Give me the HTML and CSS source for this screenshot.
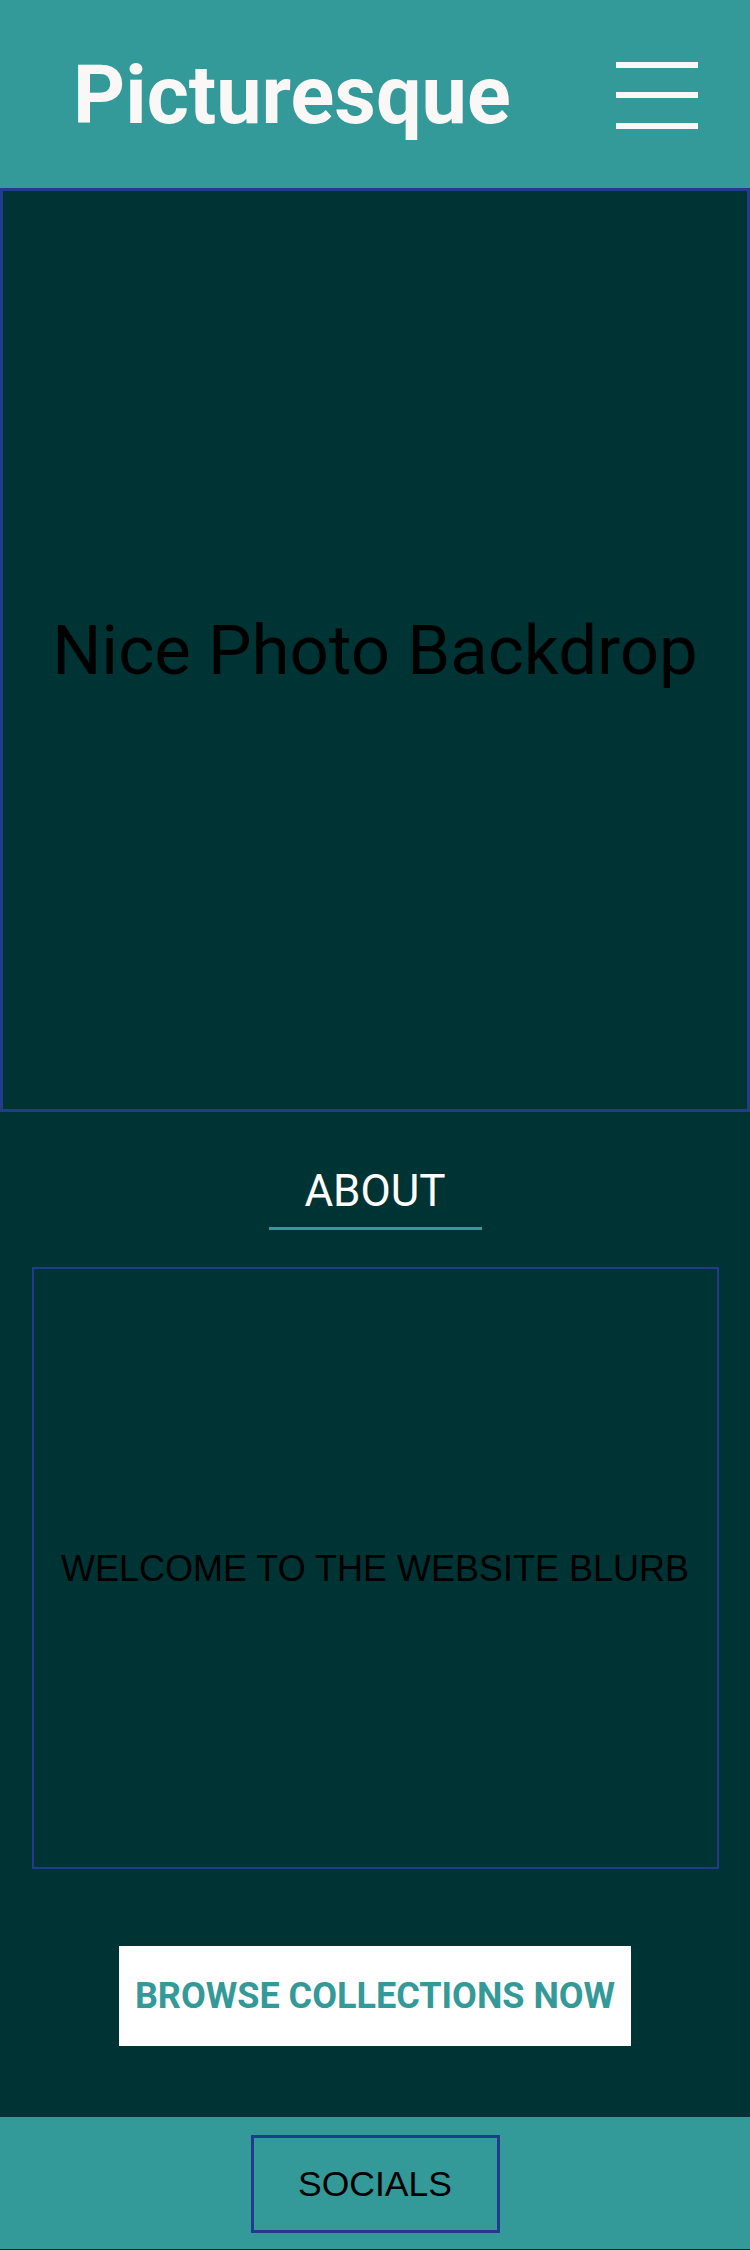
FILE: index.html
```html
<!DOCTYPE html>
<html lang="en">
<head>
<meta charset="utf-8">
<title>Picturesque</title>
<link rel="stylesheet" href="styles.css">
</head>
<body>
<header class="topbar">
  <h1 class="brand">Picturesque</h1>
  <button class="menu" aria-label="Menu">
    <span class="bar"></span>
    <span class="bar"></span>
    <span class="bar"></span>
  </button>
</header>
<main class="main">
  <section class="hero">
    <p class="hero-text">Nice Photo Backdrop</p>
  </section>
  <section class="about">
    <h2 class="about-title">ABOUT</h2>
    <div class="about-rule"></div>
    <div class="blurb">
      <p class="blurb-text">WELCOME TO THE WEBSITE BLURB</p>
    </div>
    <a class="cta" href="#">BROWSE COLLECTIONS NOW</a>
  </section>
</main>
<footer class="footer">
  <div class="socials">SOCIALS</div>
</footer>
</body>
</html>
```

FILE: styles.css
```css
* { box-sizing: border-box; }
html, body { margin: 0; padding: 0; }
body {
  background: #003333;
  font-family: Roboto, "Liberation Sans", sans-serif;
  width: 750px;
}
.topbar {
  background: #339999;
  height: 188px;
  display: flex;
  align-items: center;
  justify-content: space-between;
  padding: 0 52px 0 73px;
}
.brand {
  margin: 0;
  color: #faf8f6;
  font-family: Roboto, sans-serif;
  font-weight: 700;
  font-size: 81px;
  line-height: 1;
  padding-top: 3px;
}
.menu {
  background: none;
  border: 0;
  padding: 0;
  width: 82px;
  height: 67px;
  display: flex;
  flex-direction: column;
  justify-content: space-between;
  margin-top: 2px;
}
.bar {
  display: block;
  height: 6px;
  width: 82px;
  background: #faf8f6;
}
.hero {
  height: 924px;
  border: 3px solid #233b8c;
  display: flex;
  align-items: center;
  justify-content: center;
}
.hero-text {
  margin: 0;
  color: #000;
  font-family: Roboto, sans-serif;
  font-size: 69px;
  line-height: 1;
}
.about {
  display: flex;
  flex-direction: column;
  align-items: center;
  padding: 57px 0 71px;
}
.about-title {
  margin: 0;
  color: #fff;
  font-family: Roboto, sans-serif;
  font-weight: 400;
  font-size: 44px;
  line-height: 45px;
}
.about-rule {
  width: 213px;
  height: 3px;
  background: #339999;
  margin-top: 13px;
}
.blurb {
  margin-top: 37px;
  width: 687px;
  height: 602px;
  border: 2px solid #233b8c;
  display: flex;
  align-items: center;
  justify-content: center;
}
.blurb-text {
  margin: 0;
  color: #000;
  font-family: "Liberation Sans", Arial, sans-serif;
  font-size: 36px;
  line-height: 1;
  padding-top: 2px;
}
.cta {
  margin-top: 77px;
  width: 512px;
  height: 100px;
  background: #fff;
  color: #339999;
  font-family: Roboto, sans-serif;
  font-weight: 700;
  font-size: 36px;
  text-decoration: none;
  display: flex;
  align-items: center;
  justify-content: center;
}
.footer {
  background: #339999;
  height: 132px;
  display: flex;
  justify-content: center;
  padding-top: 18px;
}
.socials {
  width: 249px;
  height: 98px;
  border: 3px solid #233b8c;
  color: #000;
  font-family: "Liberation Sans", Arial, sans-serif;
  font-size: 35.5px;
  display: flex;
  align-items: center;
  justify-content: center;
}
```
